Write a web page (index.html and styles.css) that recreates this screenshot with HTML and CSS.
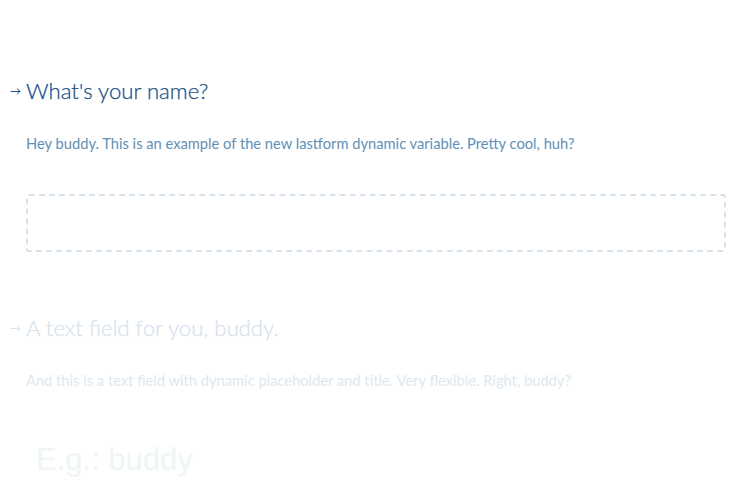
FILE: index.html
```html
<!DOCTYPE html>
<html>
<head>
<meta charset="utf-8">
<link rel="stylesheet" href="styles.css">
</head>
<body>
<div class="form">
  <section class="question active">
    <h2 class="title"><span class="arrow">→</span>What's your name?</h2>
    <p class="desc">Hey buddy. This is an example of the new lastform dynamic variable. Pretty cool, huh?</p>
    <div class="field"></div>
  </section>
  <section class="question inactive">
    <h2 class="title"><span class="arrow">→</span>A text field for you, buddy.</h2>
    <p class="desc">And this is a text field with dynamic placeholder and title. Very flexible. Right, buddy?</p>
    <div class="placeholder">E.g.: buddy</div>
  </section>
</div>
</body>
</html>
```
FILE: styles.css
```css
html, body {
  margin: 0;
  padding: 0;
  background: #ffffff;
  overflow: hidden;
}
body {
  font-family: "Lato", "Open Sans", sans-serif;
}
.form {
  padding: 74px 17px 0 26px;
}
.question {
  display: flex;
  flex-direction: column;
}
.title {
  position: relative;
  margin: 0;
  font-weight: 300;
  font-size: 22.2px;
  line-height: 34px;
  color: #1b5183;
  -webkit-text-stroke: 0.25px currentColor;
}
.arrow {
  position: absolute;
  left: -16px;
  top: 0;
  font-size: 11px;
  font-weight: 400;
  -webkit-text-stroke: 0;
}
.desc {
  margin: 25px 0 0 0;
  font-size: 14.7px;
  line-height: 20px;
  color: #6190b6;
}
.field {
  margin-top: 41px;
  height: 54px;
  border: 2px dashed #d6e2ec;
  border-radius: 3px;
}
.inactive {
  margin-top: 59px;
}
.inactive .title { color: #d5e3ee; }
.inactive .desc { color: #dce8f0; }
.placeholder {
  margin: 52px 0 0 10px;
  font-family: "Liberation Sans", sans-serif;
  font-size: 31px;
  color: #eef6f3;
}
```
